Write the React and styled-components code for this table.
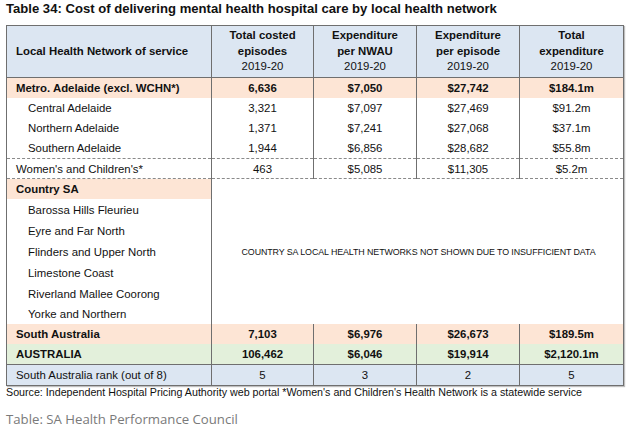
import React from 'react'
import styled, { createGlobalStyle } from 'styled-components'

const GlobalStyle = createGlobalStyle`
  html, body {
    margin: 0;
    padding: 0;
    background: #ffffff;
  }
`

const Page = styled.div`
  width: 629px;
  height: 434px;
  padding: 0 6px;
  box-sizing: border-box;
  font-family: "Liberation Sans", Arial, sans-serif;
  color: #111;
  overflow: hidden;
`

const Title = styled.h1`
  margin: 0;
  padding-top: 1px;
  height: 24px;
  font-size: 13.1px;
  line-height: 16px;
  font-weight: bold;
  color: #111;
`

const Table = styled.table`
  width: 617px;
  border-collapse: collapse;
  table-layout: fixed;
  font-size: 11.4px;
  border: 1px solid #6f6f6f;
  box-shadow: 1px 1px 1px rgba(0, 0, 0, 0.25);
`

const HeadCell = styled.th`
  background: #dce6f2;
  height: 51px;
  padding: 0 4px;
  border-left: 1px solid #6f6f6f;
  border-bottom: 1px solid #6f6f6f;
  text-align: ${(p) => (p.$left ? 'left' : 'center')};
  padding-left: ${(p) => (p.$left ? '9px' : '4px')};
  font-weight: normal;
  line-height: 15.5px;
  vertical-align: middle;
`

const HeadBold = styled.div`
  font-weight: bold;
`

const Cell = styled.td`
  height: ${(p) => p.$h || 20}px;
  padding: 0 4px;
  padding-left: ${(p) => (p.$indent ? '21px' : p.$left ? '9px' : '4px')};
  text-align: ${(p) => (p.$left ? 'left' : 'center')};
  font-weight: ${(p) => (p.$bold ? 'bold' : 'normal')};
  background: ${(p) => p.$bg || 'transparent'};
  border-left: 1px solid #6f6f6f;
  border-top: ${(p) =>
    p.$dashTop ? '1px dashed #8a8a8a' : p.$solidTop ? '1px solid #6f6f6f' : 'none'};
  border-bottom: ${(p) => (p.$dashBottom ? '1px dashed #8a8a8a' : 'none')};
  white-space: nowrap;
  vertical-align: middle;
`

const Notice = styled.td`
  border-left: 1px solid #6f6f6f;
  text-align: center;
  vertical-align: middle;
  font-size: 8.9px;
  letter-spacing: -0.1px;
  padding-left: 3px;
`

const Source = styled.p`
  margin: 0;
  font-size: 10.7px;
  line-height: 12px;
  white-space: nowrap;
  color: #111;
`

const Credit = styled.p`
  margin: 13px 0 0;
  font-family: "Open Sans", "Liberation Sans", sans-serif;
  font-size: 13.2px;
  line-height: 16px;
  color: #7a7a7a;
`

const PEACH = '#fde5d5'
const GREEN = '#e3f0db'
const BLUE = '#dce6f2'

const headers = [
  ['Total costed', 'episodes'],
  ['Expenditure', 'per NWAU'],
  ['Expenditure', 'per episode'],
  ['Total', 'expenditure'],
]

const metro = [
  ['Central Adelaide', '3,321', '$7,097', '$27,469', '$91.2m'],
  ['Northern Adelaide', '1,371', '$7,241', '$27,068', '$37.1m'],
  ['Southern Adelaide', '1,944', '$6,856', '$28,682', '$55.8m'],
]

const country = [
  'Barossa Hills Fleurieu',
  'Eyre and Far North',
  'Flinders and Upper North',
  'Limestone Coast',
  'Riverland Mallee Coorong',
  'Yorke and Northern',
]

const Row = ({ values, bg, bold, h, indent, dashTop, dashBottom, solidTop }) => (
  <tr>
    {values.map((v, i) => (
      <Cell
        key={i}
        $left={i === 0}
        $indent={indent && i === 0}
        $bg={bg}
        $bold={bold}
        $h={h}
        $dashTop={dashTop}
        $dashBottom={dashBottom}
        $solidTop={solidTop}
      >
        {v}
      </Cell>
    ))}
  </tr>
)

export default function App() {
  return (
    <>
      <GlobalStyle />
      <Page>
        <Title>Table 34: Cost of delivering mental health hospital care by local health network</Title>
        <Table>
          <colgroup>
            <col style={{ width: '205px' }} />
            <col style={{ width: '102px' }} />
            <col style={{ width: '103px' }} />
            <col style={{ width: '103px' }} />
            <col style={{ width: '104px' }} />
          </colgroup>
          <thead>
            <tr>
              <HeadCell $left>
                <HeadBold>Local Health Network of service</HeadBold>
              </HeadCell>
              {headers.map(([a, b]) => (
                <HeadCell key={b}>
                  <HeadBold>{a}</HeadBold>
                  <HeadBold>{b}</HeadBold>
                  <div>2019-20</div>
                </HeadCell>
              ))}
            </tr>
          </thead>
          <tbody>
            <Row
              values={['Metro. Adelaide (excl. WCHN*)', '6,636', '$7,050', '$27,742', '$184.1m']}
              bg={PEACH}
              bold
            />
            {metro.map((r) => (
              <Row key={r[0]} values={r} indent />
            ))}
            <Row
              values={["Women's and Children's*", '463', '$5,085', '$11,305', '$5.2m']}
              h={19}
              dashTop
              dashBottom
            />
            <tr>
              <Cell $left $bold $bg={PEACH} $h={20}>
                Country SA
              </Cell>
              <Notice colSpan={4} rowSpan={7}>
                COUNTRY SA LOCAL HEALTH NETWORKS NOT SHOWN DUE TO INSUFFICIENT DATA
              </Notice>
            </tr>
            {country.map((name, i) => (
              <tr key={name}>
                <Cell $left $indent $h={i === country.length - 1 ? 20 : 21}>
                  {name}
                </Cell>
              </tr>
            ))}
            <Row values={['South Australia', '7,103', '$6,976', '$26,673', '$189.5m']} bg={PEACH} bold />
            <Row values={['AUSTRALIA', '106,462', '$6,046', '$19,914', '$2,120.1m']} bg={GREEN} bold />
            <Row
              values={['South Australia rank (out of 8)', '5', '3', '2', '5']}
              bg={BLUE}
              h={20}
              solidTop
            />
          </tbody>
        </Table>
        <Source>
          Source: Independent Hospital Pricing Authority web portal *Women's and Children's Health Network is a
          statewide service
        </Source>
        <Credit>Table: SA Health Performance Council</Credit>
      </Page>
    </>
  )
}
